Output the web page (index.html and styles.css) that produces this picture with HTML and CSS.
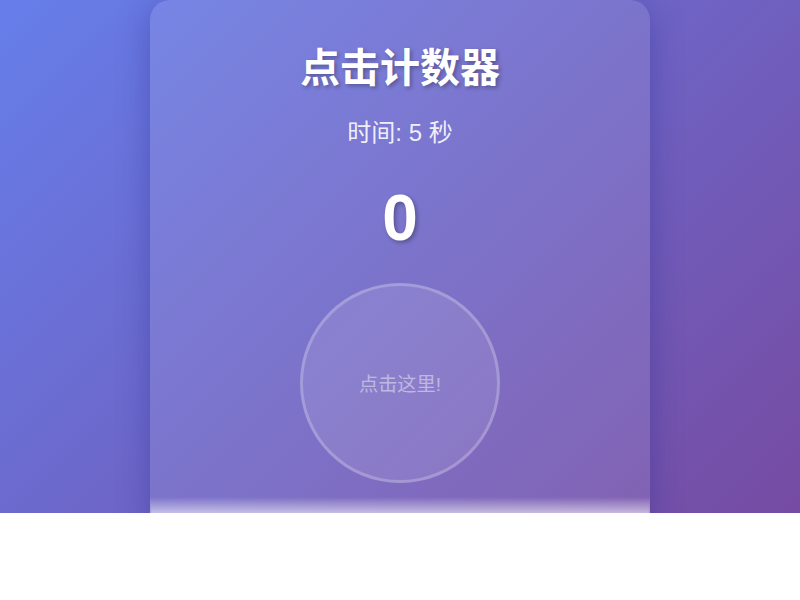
FILE: index.html
```html
<!DOCTYPE html>
<html lang="zh-CN">
<head>
<meta charset="UTF-8">
<title>点击计数器</title>
<link rel="stylesheet" href="styles.css">
</head>
<body>
<div class="stage">
  <div class="card">
    <h1 class="title">点击计数器</h1>
    <div class="timer">时间: 5 秒</div>
    <div class="count">0</div>
    <button class="click-btn" disabled>点击这里!</button>
  </div>
</div>
</body>
</html>
```
FILE: styles.css
```css
html, body {
  margin: 0;
  padding: 0;
  background: #ffffff;
}
body {
  font-family: "Liberation Sans", "Noto Sans CJK SC", sans-serif;
}
.stage {
  height: 513px;
  overflow: hidden;
  background: linear-gradient(135deg, #667eea 0%, #764ba2 100%);
  display: flex;
  justify-content: center;
  align-items: flex-start;
  position: relative;
}
.stage::after {
  content: "";
  position: absolute;
  left: 150px;
  width: 500px;
  bottom: 0;
  height: 16px;
  background: linear-gradient(to bottom, rgba(255,255,255,0) 0%, rgba(255,255,255,0.55) 100%);
}
.card {
  width: 500px;
  box-sizing: border-box;
  padding: 40px 40px 40px;
  border-radius: 20px;
  background: rgba(255, 255, 255, 0.1);
  box-shadow: 0 8px 32px rgba(31, 38, 135, 0.37);
  display: flex;
  flex-direction: column;
  align-items: center;
  color: #ffffff;
  flex-shrink: 0;
}
.title {
  margin: 0;
  font-size: 40px;
  line-height: 56px;
  font-weight: 700;
  text-shadow: 2px 2px 4px rgba(0, 0, 0, 0.3);
}
.timer {
  margin-top: 21px;
  font-size: 24px;
  line-height: 32px;
  color: rgba(255, 255, 255, 0.9);
}
.count {
  margin-top: 29px;
  font-size: 64px;
  line-height: 80px;
  font-weight: 700;
  text-shadow: 2px 2px 4px rgba(0, 0, 0, 0.3);
}
.click-btn {
  margin-top: 25px;
  width: 200px;
  height: 200px;
  border-radius: 50%;
  border: 3px solid rgba(255, 255, 255, 0.5);
  background: rgba(255, 255, 255, 0.2);
  color: #ffffff;
  font-family: inherit;
  font-size: 19.2px;
  opacity: 0.5;
  padding: 0;
}
```
